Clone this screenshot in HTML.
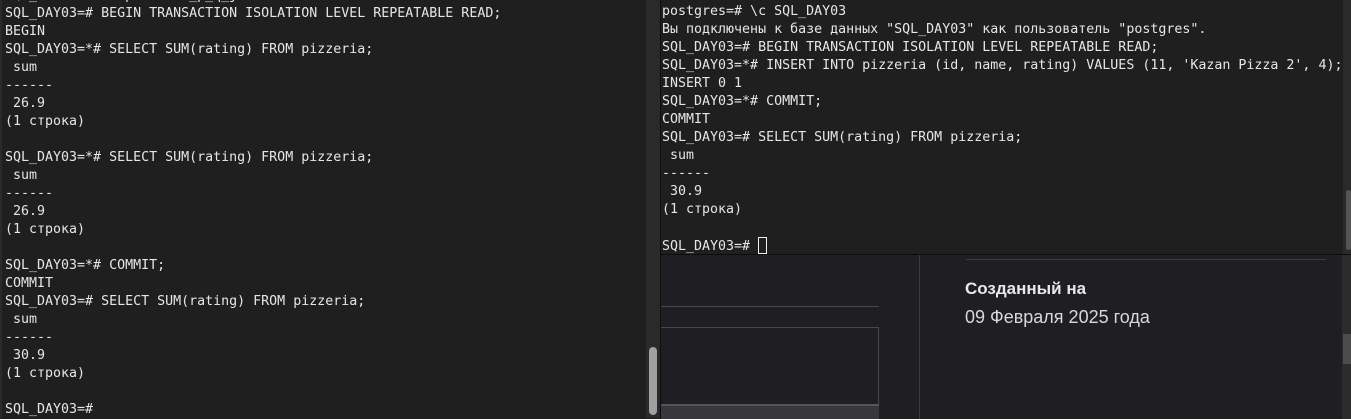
<!DOCTYPE html>
<html><head><meta charset="utf-8"><style>
*{margin:0;padding:0;box-sizing:border-box}
body{width:1351px;height:418px;overflow:hidden;background:#1e1e1e;position:relative}
.term{position:absolute;font-family:"DejaVu Sans Mono","Liberation Mono",monospace;font-size:13.3px;line-height:18px;color:#e6e6e6;white-space:pre}
#lp{left:0;top:0;width:646px;height:418px;background:#1f1f1f;border-left:2px solid #2a2a2a}
#lsb{left:646px;top:0;width:14px;height:418px;background:#2a2a2a;position:absolute}
#lth{position:absolute;left:649px;top:347px;width:8px;height:68px;border-radius:4px;background:#a0a0a0}
#rp{left:661px;top:0;width:682px;height:254px;background:#1f1f1f}
#rsb{position:absolute;left:1343px;top:0;width:8px;height:254px;background:#2a2a2a}
#rth{position:absolute;left:1346px;top:190px;width:5px;height:60px;border-radius:3px;background:#555}
#web{position:absolute;left:661px;top:254px;width:690px;height:164px;background:#1f1f23;border-top:1px solid #0c0c0c}
.cur{display:inline-block;width:9px;height:17px;border:1px solid #eee;vertical-align:-4px}
</style></head><body>
<div class="term" id="lp"><div style="position:relative;left:3px;top:-13px">SQL_DAY03=# \c pizzeria_p_q_j
SQL_DAY03=# BEGIN TRANSACTION ISOLATION LEVEL REPEATABLE READ;
BEGIN
SQL_DAY03=*# SELECT SUM(rating) FROM pizzeria;
 sum
------
 26.9
(1 строка)

SQL_DAY03=*# SELECT SUM(rating) FROM pizzeria;
 sum
------
 26.9
(1 строка)

SQL_DAY03=*# COMMIT;
COMMIT
SQL_DAY03=# SELECT SUM(rating) FROM pizzeria;
 sum
------
 30.9
(1 строка)

SQL_DAY03=#</div></div>
<div id="lsb"></div><div id="lth"></div>
<div style="position:absolute;left:660px;top:0;width:1px;height:418px;background:#0e0e0e"></div>
<div class="term" id="rp"><div style="position:relative;left:1px;top:3px">postgres=# \c SQL_DAY03
Вы подключены к базе данных "SQL_DAY03" как пользователь "postgres".
SQL_DAY03=# BEGIN TRANSACTION ISOLATION LEVEL REPEATABLE READ;
SQL_DAY03=*# INSERT INTO pizzeria (id, name, rating) VALUES (11, 'Kazan Pizza 2', 4);
INSERT 0 1
SQL_DAY03=*# COMMIT;
COMMIT
SQL_DAY03=# SELECT SUM(rating) FROM pizzeria;
 sum
------
 30.9
(1 строка)

SQL_DAY03=# <span class="cur"></span></div></div>
<div id="rsb"></div><div id="rth"></div>
<div id="web">
 <div style="position:absolute;left:0;top:51px;width:218px;height:1px;background:#48484c"></div>
 <div style="position:absolute;left:0;top:72px;width:218px;height:78px;border:1px solid #48484c;border-left:none"></div>
 <div style="position:absolute;left:0;top:149px;width:218px;height:15px;background:#38383c;border-top:2px solid #555"></div>
 <div style="position:absolute;left:258px;top:0;width:1px;height:164px;background:#3a3a3e"></div>
 <div style="position:absolute;left:305px;top:4px;width:360px;height:1px;background:#3a3a3e"></div>
 <div style="position:absolute;left:304px;top:24px;font-family:'Liberation Sans',sans-serif;font-weight:bold;font-size:17px;color:#e8e8e8">Созданный на</div>
 <div style="position:absolute;left:304px;top:52px;font-family:'Liberation Sans',sans-serif;font-size:18px;color:#d8d8d8">09 Февраля 2025 года</div>
 <div style="position:absolute;left:681px;top:0;width:9px;height:164px;background:#2c2c2c"></div>
 <div style="position:absolute;left:682px;top:79px;width:8px;height:30px;background:#4c4c4c"></div>
</div>
</body></html>
